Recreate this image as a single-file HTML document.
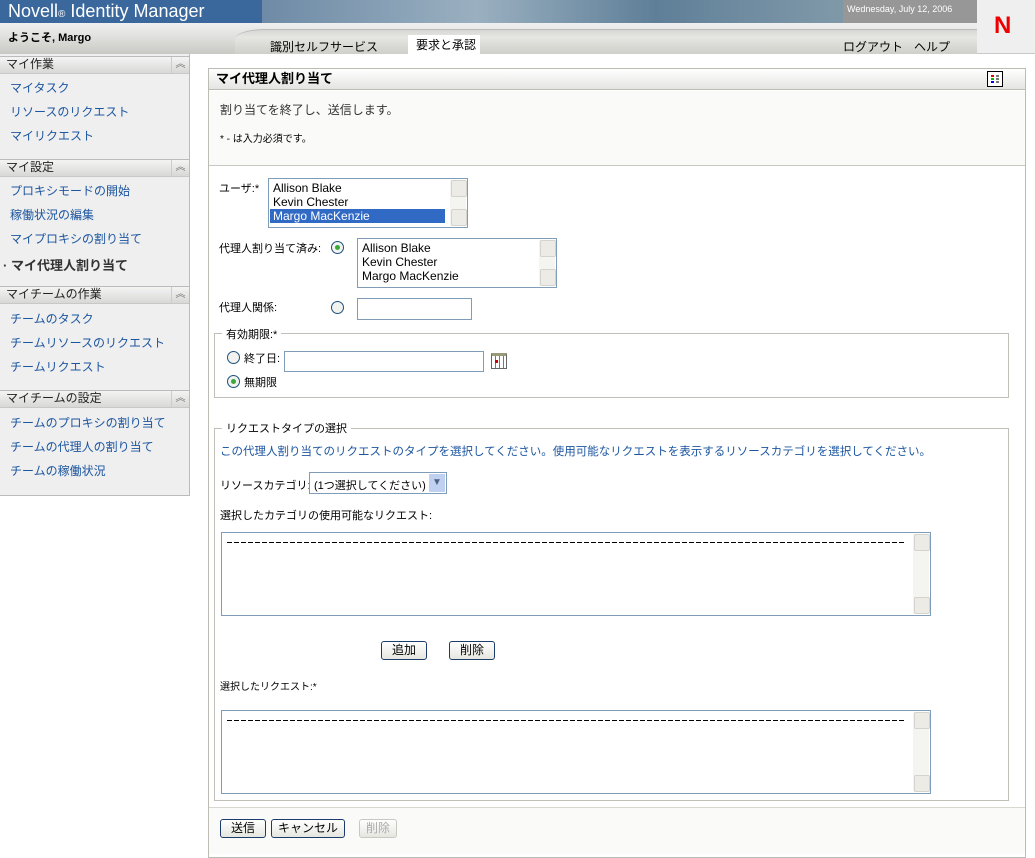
<!DOCTYPE html>
<html><head><meta charset="utf-8"><style>
*{box-sizing:border-box;margin:0;padding:0}
body{width:1035px;height:854px;overflow:hidden;background:#fff;font-family:"Liberation Sans","Noto Sans CJK JP",sans-serif;font-size:12px;color:#000;position:relative}
.a{position:absolute;white-space:nowrap}
.lnk{color:#1d56a0}
.sh{position:absolute;left:0;width:189px;height:18px;background:linear-gradient(#f4f4f4,#d8d8d6);border-top:1px solid #bbb;border-bottom:1px solid #c8c8c8;padding:0 6px;line-height:15px;color:#222}
.sh i{position:absolute;right:0;top:0;width:18px;height:16px;border-left:1px solid #ccc;font-style:normal;font-size:10px;text-align:center;color:#777;line-height:16px}
.lb{position:absolute;border:1px solid #7f9db9;background:#fff;font-size:12px;line-height:14px;padding:2px 4px}
.sb{position:absolute;right:1px;top:1px;bottom:1px;width:16px;background:#f4f4f0}
.sb:before,.sb:after{content:"";position:absolute;left:1px;width:14px;height:15px;background:#ecebe6;border:1px solid #d4d3cc;border-radius:2px}
.sb:before{top:0}.sb:after{bottom:0}
.rad{position:absolute;width:13px;height:13px;border-radius:50%;border:1px solid #1c5180;background:#f2f2ee}
.rad.on:after{content:"";position:absolute;left:3px;top:3px;width:5px;height:5px;border-radius:50%;background:#3ba83b}
.btn{position:absolute;height:19px;border:1px solid #1c3c6c;border-radius:3px;background:linear-gradient(#fff,#e6e6e0);text-align:center;line-height:17px;font-size:12px}
.fs{position:absolute;border:1px solid #c0c0b8}
.lg{position:absolute;background:#fff;padding:0 4px}
.dash{position:absolute;left:5px;top:9px;width:677px;height:1px;background:repeating-linear-gradient(90deg,#000 0 5px,transparent 5px 7px)}
</style></head><body>
<div class="a" style="left:0;top:0;width:262px;height:23px;background:#3a679c"></div>
<div class="a" style="left:262px;top:0;width:715px;height:23px;background:linear-gradient(90deg,#6e8aa6,#9ab0c0 30%,#5f7f98 55%,#7f98a8 80%)"></div>
<div class="a" style="left:843px;top:0;width:134px;height:23px;background:#979797"></div>
<div class="a" style="left:8px;top:1px;color:#fff;font-size:18px">Novell<span style="font-size:10px">®</span> Identity Manager</div>
<div class="a" style="left:847px;top:4px;color:#fff;font-size:9px">Wednesday, July 12, 2006</div>
<div class="a" style="left:977px;top:0;width:58px;height:54px;background:#efefef;border-bottom:1px solid #c8c8c8"></div>
<div class="a" style="left:994px;top:12px;color:#e00;font-size:24px;font-weight:bold">N</div>
<div class="a" style="left:0;top:23px;width:977px;height:31px;background:linear-gradient(#f0f0f0,#e2e2e0 40%,#c8c8c4)"></div>
<div class="a" style="left:235px;top:29px;width:742px;height:25px;background:linear-gradient(#d6d6d2,#e6e6e2 30%,#cfcfca);border-top-left-radius:30px 10px;border-top:1px solid #bbb"></div>
<div class="a" style="left:8px;top:29px;font-weight:bold;font-size:11px">ようこそ, Margo</div>
<div class="a" style="left:270px;top:38px">識別セルフサービス</div>
<div class="a" style="left:408px;top:35px;width:72px;height:19px;background:#fff"></div>
<div class="a" style="left:416px;top:36px">要求と承認</div>
<div class="a" style="left:843px;top:38px">ログアウト</div>
<div class="a" style="left:914px;top:38px">ヘルプ</div>
<div class="a" style="left:0;top:54px;width:190px;height:442px;background:#efefef;border-right:1px solid #bbb;border-bottom:1px solid #bbb"></div>
<div class="sh" style="top:56px">マイ作業<i>︽</i></div>
<div class="a lnk" style="left:10px;top:79px">マイタスク</div>
<div class="a lnk" style="left:10px;top:103px">リソースのリクエスト</div>
<div class="a lnk" style="left:10px;top:127px">マイリクエスト</div>
<div class="sh" style="top:159px">マイ設定<i>︽</i></div>
<div class="a lnk" style="left:10px;top:182px">プロキシモードの開始</div>
<div class="a lnk" style="left:10px;top:206px">稼働状況の編集</div>
<div class="a lnk" style="left:10px;top:230px">マイプロキシの割り当て</div>
<div class="a" style="left:3px;top:255px;font-weight:bold;font-size:13px;color:#333">· マイ代理人割り当て</div>
<div class="sh" style="top:286px">マイチームの作業<i>︽</i></div>
<div class="a lnk" style="left:10px;top:310px">チームのタスク</div>
<div class="a lnk" style="left:10px;top:334px">チームリソースのリクエスト</div>
<div class="a lnk" style="left:10px;top:358px">チームリクエスト</div>
<div class="sh" style="top:390px">マイチームの設定<i>︽</i></div>
<div class="a lnk" style="left:10px;top:414px">チームのプロキシの割り当て</div>
<div class="a lnk" style="left:10px;top:438px">チームの代理人の割り当て</div>
<div class="a lnk" style="left:10px;top:462px">チームの稼働状況</div>
<div class="a" style="left:208px;top:68px;width:818px;height:790px;border:1px solid #bcbcb4;background:#fff"></div>
<div class="a" style="left:209px;top:69px;width:816px;height:21px;background:linear-gradient(#fff,#e4e4e2);border-bottom:1px solid #bcbcb4"></div>
<div class="a" style="left:216px;top:71px;font-weight:bold;font-size:13px;line-height:16px">マイ代理人割り当て</div>
<div class="a" style="left:987px;top:71px;width:16px;height:16px;border:1px solid #000;background:#fff">
<div class="a" style="left:3px;top:3px;width:3px;height:2px;background:#e00"></div><div class="a" style="left:3px;top:6px;width:3px;height:2px;background:#0b0"></div><div class="a" style="left:3px;top:9px;width:3px;height:2px;background:#00e"></div>
<div class="a" style="left:8px;top:3px;width:3px;height:8px;background:repeating-linear-gradient(#777 0 2px,transparent 2px 3px)"></div></div>
<div class="a" style="left:209px;top:91px;width:816px;height:75px;background:#fafaf8;border-bottom:1px solid #c8c8c0"></div>
<div class="a" style="left:220px;top:101px;color:#333">割り当てを終了し、送信します。</div>
<div class="a" style="left:220px;top:130px;font-size:10px">* - は入力必須です。</div>
<div class="a" style="left:219px;top:180px;font-size:11px">ユーザ:*</div>
<div class="lb" style="left:268px;top:178px;width:200px;height:50px">Allison Blake<br>Kevin Chester<br><span style="display:block;background:#316ac5;color:#fff;margin:0 18px 0 -3px;padding-left:3px">Margo MacKenzie</span><div class="sb"></div></div>
<div class="a" style="left:219px;top:240px;font-size:11px">代理人割り当て済み:</div>
<div class="rad on" style="left:331px;top:241px"></div>
<div class="lb" style="left:357px;top:238px;width:200px;height:50px">Allison Blake<br>Kevin Chester<br>Margo MacKenzie<div class="sb"></div></div>
<div class="a" style="left:219px;top:299px;font-size:11px">代理人関係:</div>
<div class="rad" style="left:331px;top:301px"></div>
<div class="a" style="left:357px;top:298px;width:115px;height:22px;border:1px solid #7f9db9"></div>
<div class="fs" style="left:214px;top:333px;width:795px;height:65px"></div>
<div class="lg" style="left:222px;top:326px;font-size:11px">有効期限:*</div>
<div class="rad" style="left:227px;top:351px"></div>
<div class="a" style="left:244px;top:350px;font-size:11px">終了日:</div>
<div class="a" style="left:284px;top:351px;width:200px;height:21px;border:1px solid #7f9db9"></div>
<div class="a" style="left:491px;top:353px;width:16px;height:16px;border:1px solid #666;background:repeating-linear-gradient(90deg,#fff 0 3px,#777 3px 4px),#fff;border-top:3px solid #9a9a7a"></div>
<div class="a" style="left:495px;top:360px;width:3px;height:3px;background:#c00"></div>
<div class="rad on" style="left:227px;top:375px"></div>
<div class="a" style="left:244px;top:374px;font-size:11px">無期限</div>
<div class="fs" style="left:214px;top:428px;width:795px;height:373px"></div>
<div class="lg" style="left:222px;top:420px;font-size:11px">リクエストタイプの選択</div>
<div class="a lnk" style="left:220px;top:443px;font-size:11.5px">この代理人割り当てのリクエストのタイプを選択してください。使用可能なリクエストを表示するリソースカテゴリを選択してください。</div>
<div class="a" style="left:220px;top:477px;font-size:11px">リソースカテゴリ:</div>
<div class="a" style="left:309px;top:472px;width:138px;height:22px;border:1px solid #7f9db9;background:#fff;padding:4px 4px;font-size:11px;overflow:hidden">(1つ選択してください)</div>
<div class="a" style="left:429px;top:474px;width:16px;height:18px;background:#c0d0f0;color:#4d6185;font-size:10px;text-align:center;line-height:18px">▼</div>
<div class="a" style="left:220px;top:507px;font-size:11px">選択したカテゴリの使用可能なリクエスト:</div>
<div class="lb" style="left:221px;top:532px;width:710px;height:84px"><div class="dash"></div><div class="sb"></div></div>
<div class="btn" style="left:381px;top:641px;width:46px">追加</div>
<div class="btn" style="left:449px;top:641px;width:46px">削除</div>
<div class="a" style="left:220px;top:678px;font-size:10px">選択したリクエスト:*</div>
<div class="lb" style="left:221px;top:710px;width:710px;height:84px"><div class="dash"></div><div class="sb"></div></div>
<div class="a" style="left:209px;top:807px;width:816px;height:47px;background:#fafaf8;border-top:1px solid #d8d8d0"></div>
<div class="btn" style="left:220px;top:819px;width:46px">送信</div>
<div class="btn" style="left:271px;top:819px;width:74px">キャンセル</div>
<div class="btn" style="left:359px;top:819px;width:38px;border-color:#c8c8c0;color:#aaa">削除</div>
</body></html>
